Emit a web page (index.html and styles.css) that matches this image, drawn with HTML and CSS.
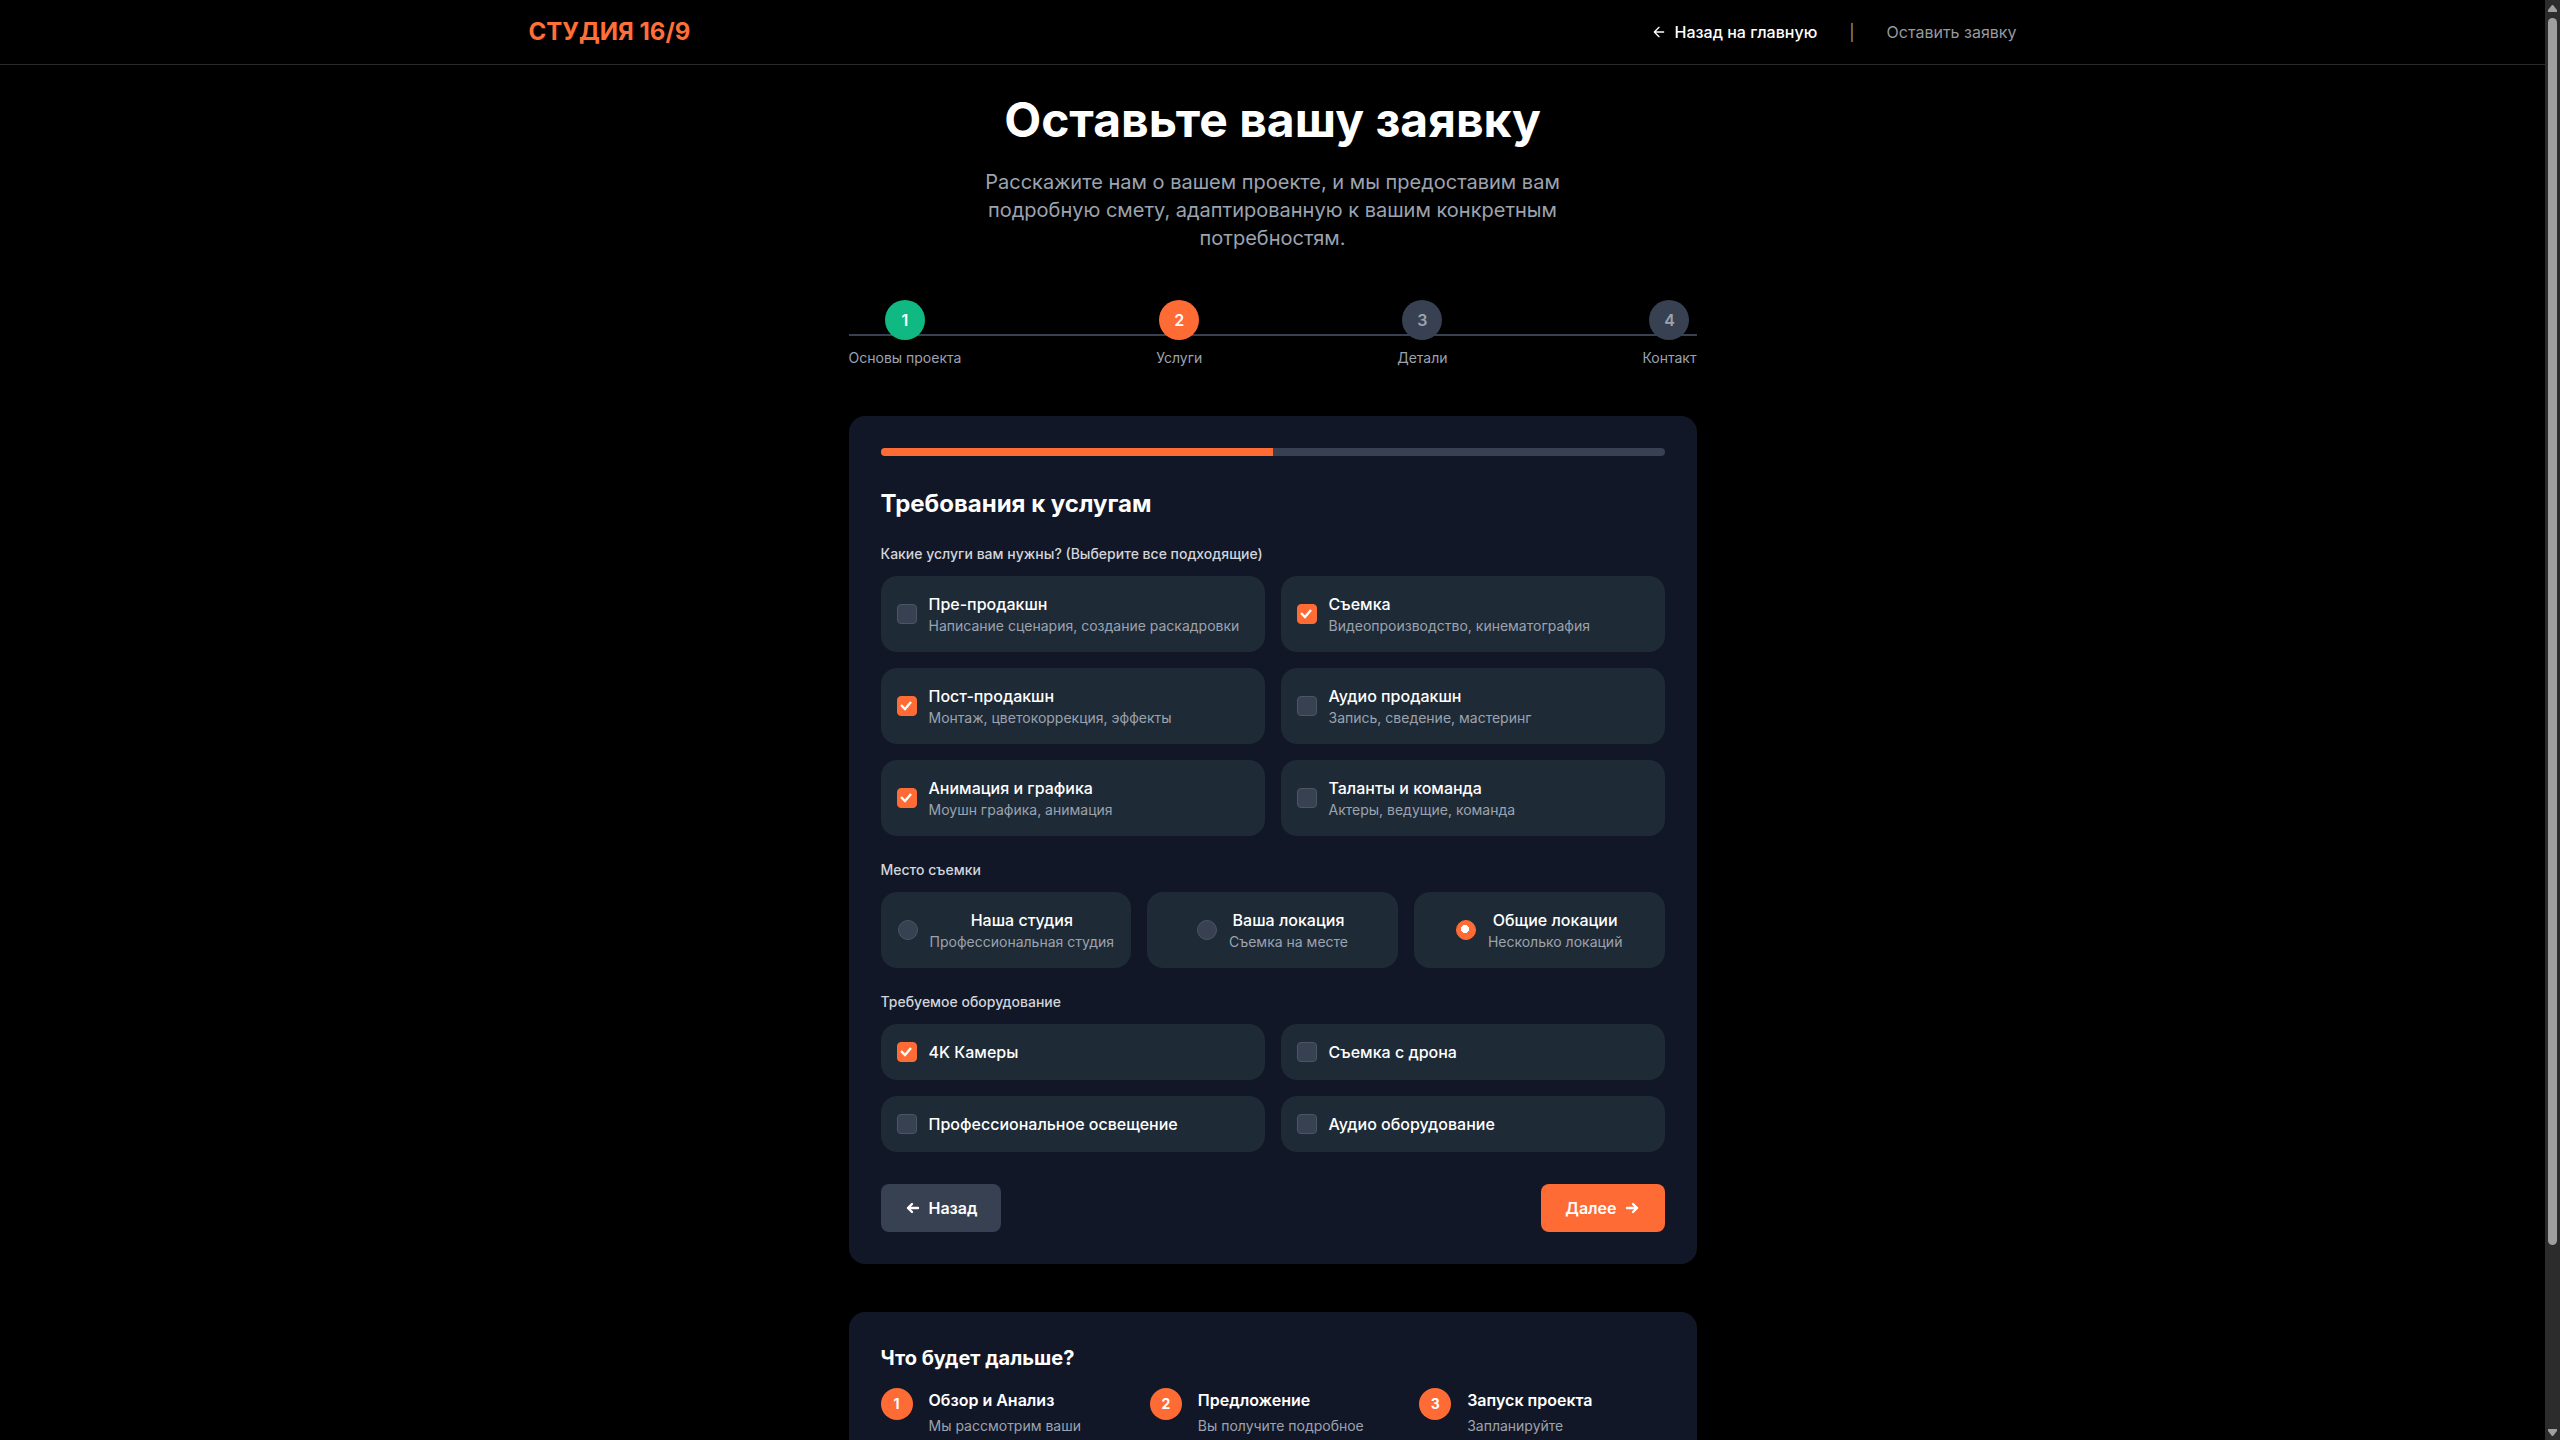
FILE: index.html
```html
<!DOCTYPE html>
<html lang="ru">
<head>
<meta charset="utf-8">
<meta name="viewport" content="width=device-width, initial-scale=1">
<title>Студия 16/9 — Оставить заявку</title>
<link rel="stylesheet" href="styles.css">
</head>
<body>
<div class="page">
  <header class="site-header">
    <div class="site-header-inner">
      <a class="logo" href="#">СТУДИЯ 16/9</a>
      <nav class="nav">
        <a class="nav-back" href="#"><svg class="icon icon-nav" viewBox="0 0 24 24" aria-hidden="true"><path d="m12 19-7-7 7-7M19 12H5"/></svg>Назад на главную</a>
        <span class="nav-divider">|</span>
        <span class="nav-current">Оставить заявку</span>
      </nav>
    </div>
  </header>

  <main class="content">
    <h1 class="page-title">Оставьте вашу заявку</h1>
    <p class="lead">Расскажите нам о вашем проекте, и мы предоставим вам подробную смету, адаптированную к вашим конкретным потребностям.</p>

    <ol class="steps">
      <li class="step"><span class="step-dot is-done">1</span><span class="step-label">Основы проекта</span></li>
      <li class="step"><span class="step-dot is-active">2</span><span class="step-label">Услуги</span></li>
      <li class="step"><span class="step-dot">3</span><span class="step-label">Детали</span></li>
      <li class="step"><span class="step-dot">4</span><span class="step-label">Контакт</span></li>
    </ol>

    <form class="panel">
      <div class="progress"><div class="progress-fill" style="width: 50%"></div></div>
      <h2 class="panel-title">Требования к услугам</h2>

      <fieldset class="group">
        <legend class="group-label">Какие услуги вам нужны? (Выберите все подходящие)</legend>
        <div class="options two">
          <label class="option"><input class="check" type="checkbox"><span class="option-text"><span class="option-name">Пре-продакшн</span><span class="option-note">Написание сценария, создание раскадровки</span></span></label>
          <label class="option"><input class="check" type="checkbox" checked><span class="option-text"><span class="option-name">Съемка</span><span class="option-note">Видеопроизводство, кинематография</span></span></label>
          <label class="option"><input class="check" type="checkbox" checked><span class="option-text"><span class="option-name">Пост-продакшн</span><span class="option-note">Монтаж, цветокоррекция, эффекты</span></span></label>
          <label class="option"><input class="check" type="checkbox"><span class="option-text"><span class="option-name">Аудио продакшн</span><span class="option-note">Запись, сведение, мастеринг</span></span></label>
          <label class="option"><input class="check" type="checkbox" checked><span class="option-text"><span class="option-name">Анимация и графика</span><span class="option-note">Моушн графика, анимация</span></span></label>
          <label class="option"><input class="check" type="checkbox"><span class="option-text"><span class="option-name">Таланты и команда</span><span class="option-note">Актеры, ведущие, команда</span></span></label>
        </div>
      </fieldset>

      <fieldset class="group">
        <legend class="group-label">Место съемки</legend>
        <div class="options three">
          <label class="option centered"><input class="radio" type="radio" name="location"><span class="option-text"><span class="option-name">Наша студия</span><span class="option-note">Профессиональная студия</span></span></label>
          <label class="option centered"><input class="radio" type="radio" name="location"><span class="option-text"><span class="option-name">Ваша локация</span><span class="option-note">Съемка на месте</span></span></label>
          <label class="option centered"><input class="radio" type="radio" name="location" checked><span class="option-text"><span class="option-name">Общие локации</span><span class="option-note">Несколько локаций</span></span></label>
        </div>
      </fieldset>

      <fieldset class="group">
        <legend class="group-label">Требуемое оборудование</legend>
        <div class="options two">
          <label class="option"><input class="check" type="checkbox" checked><span class="option-name">4K Камеры</span></label>
          <label class="option"><input class="check" type="checkbox"><span class="option-name">Съемка с дрона</span></label>
          <label class="option"><input class="check" type="checkbox"><span class="option-name">Профессиональное освещение</span></label>
          <label class="option"><input class="check" type="checkbox"><span class="option-name">Аудио оборудование</span></label>
        </div>
      </fieldset>

      <div class="actions">
        <button class="button" type="button"><svg class="icon" viewBox="0 0 16 16" aria-hidden="true"><path d="M7 4 3 8l4 4M13 8H3"/></svg>Назад</button>
        <button class="button primary" type="button">Далее<svg class="icon" viewBox="0 0 16 16" aria-hidden="true"><path d="m8 4 4 4-4 4M2 8h10"/></svg></button>
      </div>
    </form>

    <section class="panel next">
      <h2 class="next-title">Что будет дальше?</h2>
      <div class="next-grid">
        <div class="next-item"><span class="next-dot">1</span><div><h3 class="next-name">Обзор и Анализ</h3><p class="next-note">Мы рассмотрим ваши</p></div></div>
        <div class="next-item"><span class="next-dot">2</span><div><h3 class="next-name">Предложение</h3><p class="next-note">Вы получите подробное</p></div></div>
        <div class="next-item"><span class="next-dot">3</span><div><h3 class="next-name">Запуск проекта</h3><p class="next-note">Запланируйте</p></div></div>
      </div>
    </section>
  </main>
</div>
<div class="scrollbar" aria-hidden="true">
  <svg class="scroll-arrow" viewBox="0 0 9 7"><path d="M4 0h1l4 5v2H0V5z"/></svg>
  <div class="scroll-track"><div class="scroll-thumb"></div></div>
  <svg class="scroll-arrow" viewBox="0 0 9 7"><path d="M4 7h1l4-5V0H0v2z"/></svg>
</div>
</body>
</html>
```

FILE: styles.css
```css
*,
*::before {
  box-sizing: border-box;
}

body {
  display: flex;
  height: 100vh;
  margin: 0;
  overflow: hidden;
  background: #000;
  color: #fff;
  font: 16px/24px Inter, "Noto Sans", sans-serif;
}

h1,
h2,
h3,
p,
ol,
fieldset {
  margin: 0;
  padding: 0;
}

.page {
  flex: 1;
  overflow-x: hidden;
  overflow-y: auto;
  scrollbar-width: none;
}

/* Header */
.site-header {
  border-bottom: 1px solid #2a2a2a;
}

.site-header-inner {
  display: flex;
  align-items: center;
  justify-content: space-between;
  max-width: 1536px;
  height: 64px;
  margin: 0 auto;
  padding: 0 24px;
}

.logo {
  color: #ff6f37;
  font-size: 24px;
  font-weight: 700;
  line-height: 32px;
  text-decoration: none;
}

.nav {
  display: flex;
  align-items: center;
  gap: 32px;
}

.nav-back {
  display: flex;
  align-items: center;
  gap: 8px;
  color: #fff;
  font-weight: 500;
  text-decoration: none;
}

.nav-divider,
.nav-current {
  color: #97999e;
}

.icon {
  width: 16px;
  height: 16px;
  fill: none;
  stroke: currentColor;
  stroke-width: 2;
  stroke-linecap: round;
  stroke-linejoin: round;
}

/* Intro */
.content {
  max-width: 896px;
  margin: 0 auto;
  padding: 31px 24px 64px;
}

.page-title {
  margin-bottom: 24px;
  font-size: 48px;
  font-weight: 700;
  line-height: 48px;
  text-align: center;
}

.lead {
  max-width: 672px;
  margin: 0 auto 48px;
  color: #9ca3af;
  font-size: 20px;
  line-height: 28px;
  text-align: center;
}

.steps {
  display: flex;
  position: relative;
  justify-content: space-between;
  margin-bottom: 48px;
  list-style: none;
}

.steps::before {
  position: absolute;
  top: 50%;
  right: 0;
  left: 0;
  height: 2px;
  background: #374151;
  content: "";
}

.step {
  display: flex;
  position: relative;
  flex-direction: column;
  align-items: center;
  gap: 8px;
}

.step-dot {
  display: flex;
  align-items: center;
  justify-content: center;
  width: 40px;
  height: 40px;
  border-radius: 50%;
  background: #374151;
  color: #9ca3af;
  font-weight: 600;
}

.step-dot.is-done {
  background: #10b981;
  color: #fff;
}

.step-dot.is-active {
  background: #ff6b35;
  color: #fff;
}

.step-label {
  color: #9ca3af;
  font-size: 14px;
  line-height: 20px;
}

/* Form */
.panel {
  padding: 32px;
  border-radius: 16px;
  background: #111726;
}

.progress {
  height: 8px;
  margin-bottom: 32px;
  overflow: hidden;
  border-radius: 4px;
  background: #374151;
}

.progress-fill {
  height: 100%;
  background: #ff6b35;
}

.panel-title {
  margin-bottom: 24px;
  font-size: 24px;
  font-weight: 700;
  line-height: 32px;
}

.group {
  min-width: 0;
  margin-bottom: 24px;
  border: 0;
}

.group-label {
  margin-bottom: 12px;
  padding: 0;
  color: #d1d5db;
  font-size: 14px;
  font-weight: 500;
  line-height: 20px;
}

.options {
  display: grid;
  gap: 16px;
}

.two {
  grid-template-columns: repeat(2, 1fr);
}

.three {
  grid-template-columns: repeat(3, 1fr);
}

.option {
  display: flex;
  align-items: center;
  gap: 12px;
  padding: 16px;
  border-radius: 16px;
  background: #1e2a36;
}

.option.centered {
  justify-content: center;
  text-align: center;
}

.option-name,
.option-note {
  display: block;
}

.option-name {
  font-weight: 500;
}

.option-note {
  color: #9ca3af;
  font-size: 14px;
  line-height: 20px;
}

.check,
.radio {
  flex: none;
  width: 20px;
  height: 20px;
  margin: 0;
  border: 1px solid #4b5563;
  border-radius: 4px;
  appearance: none;
  background: #374151 center / 20px 20px no-repeat;
}

.radio {
  border-radius: 50%;
}

.check:checked,
.radio:checked {
  border-color: #ff6b35;
  background-color: #ff6b35;
}

.check:checked {
  background-image: url("data:image/svg+xml,%3Csvg xmlns='http://www.w3.org/2000/svg' viewBox='0 0 20 20'%3E%3Cpath d='M4 9l4 4 6-7' fill='none' stroke='white' stroke-width='2.4'/%3E%3C/svg%3E");
}

.radio:checked {
  background-image: radial-gradient(circle at 9px 9px, #fff 4px, transparent 4px);
}

.actions {
  display: flex;
  justify-content: space-between;
  padding-top: 8px;
}

.button {
  display: flex;
  align-items: center;
  gap: 8px;
  padding: 12px 24px;
  border: 0;
  border-radius: 8px;
  background: #374151;
  color: #fff;
  font: inherit;
  font-weight: 600;
}

.button.primary {
  background: #ff6b35;
}

.button .icon {
  stroke-width: 2.4;
}

/* What happens next */
.next {
  min-height: 272px;
  margin-top: 48px;
}

.next-title {
  margin-bottom: 16px;
  font-size: 20px;
  font-weight: 700;
  line-height: 28px;
}

.next-grid {
  display: grid;
  grid-template-columns: repeat(3, 1fr);
  gap: 24px;
}

.next-item {
  display: flex;
  align-items: flex-start;
  gap: 16px;
}

.next-dot {
  display: flex;
  flex: none;
  align-items: center;
  justify-content: center;
  width: 32px;
  height: 32px;
  border-radius: 50%;
  background: #ff6b35;
  font-size: 14px;
  font-weight: 700;
}

.next-name {
  margin-bottom: 4px;
  font-size: 16px;
  font-weight: 600;
}

.next-note {
  color: #9ca3af;
  font-size: 14px;
  line-height: 20px;
}

/* Scrollbar */
.scrollbar {
  display: flex;
  flex: none;
  flex-direction: column;
  align-items: center;
  gap: 6px;
  width: 15px;
  padding: 5px 0 4px;
  background: #2c2c2c;
}

.scroll-arrow {
  width: 9px;
  height: 7px;
  fill: #9f9f9f;
}

.scroll-track {
  display: flex;
  flex: 1;
  width: 9px;
  padding-bottom: 178px;
}

.scroll-thumb {
  flex: 1;
  border-radius: 5px;
  background: #9f9f9f;
}
```
